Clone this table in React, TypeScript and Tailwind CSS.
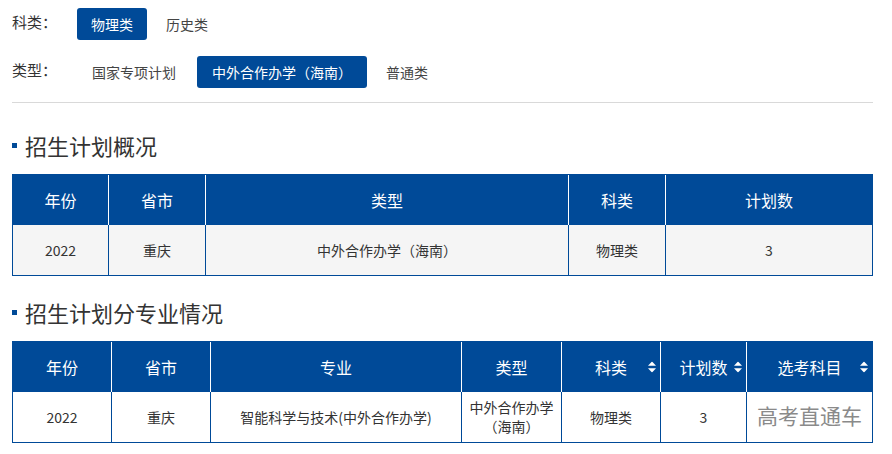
import React from 'react';

const BLUE = 'bg-[#004a98]';

function SortIcon() {
  return (
    <svg width="8" height="11" viewBox="0 0 8 11" className="absolute right-[4px] top-1/2 -translate-y-1/2" fill="#fff">
      <path d="M4 0 L8 4.3 L0 4.3 Z" />
      <path d="M0 6.7 L8 6.7 L4 11 Z" />
    </svg>
  );
}

type Col = { label: string; w?: string; sort?: boolean };

function Heading({ text, top }: { text: string; top: string }) {
  return (
    <div className={`flex items-center h-8 ${top} mb-[13px]`}>
      <span className="w-[5px] h-[5px] bg-[#004a98] mr-2" />
      <span className="text-[22px] leading-8 text-[#333]">{text}</span>
    </div>
  );
}

function DataTable({ cols, row, shaded }: { cols: Col[]; row: React.ReactNode[]; shaded?: boolean }) {
  return (
    <div className="border border-[#004a98]">
      <table className="w-full table-fixed border-separate border-spacing-0">
        <colgroup>
          {cols.map((c, i) => (
            <col key={i} className={c.w} />
          ))}
        </colgroup>
        <thead>
          <tr className={BLUE}>
            {cols.map((c, i) => (
              <th
                key={i}
                className={`relative h-[50px] p-0 text-[16px] font-normal text-white text-center ${i > 0 ? 'border-l border-white' : ''}`}
              >
                {c.label}
                {c.sort && <SortIcon />}
              </th>
            ))}
          </tr>
        </thead>
        <tbody>
          <tr className={shaded ? 'bg-[#f5f5f5]' : 'bg-white'}>
            {row.map((v, i) => (
              <td
                key={i}
                className={`h-[50px] px-1 py-0 text-[14px] leading-[19px] text-[#333] text-center ${i > 0 ? 'border-l border-[#004a98]' : ''}`}
              >
                {v}
              </td>
            ))}
          </tr>
        </tbody>
      </table>
    </div>
  );
}

export default function App() {
  return (
    <div className="w-[892px] h-[454px] bg-white overflow-hidden font-['Noto_Sans_CJK_SC',sans-serif]">
      <div className="w-[861px] ml-3 pt-2">
        {/* filters */}
        <div className="flex items-center h-8">
          <span className="w-[65px] -mt-[3px] text-[15px] text-[#333]">科类：</span>
          <span className="h-8 leading-8 px-[14px] rounded-[3px] bg-[#004a98] text-white text-[14px]">物理类</span>
          <span className="h-8 leading-8 px-[15px] ml-[4px] text-[14px] text-[#444]">历史类</span>
        </div>
        <div className="flex items-center h-8 mt-4">
          <span className="w-[65px] -mt-[3px] text-[15px] text-[#333]">类型：</span>
          <span className="h-8 leading-8 px-[15px] text-[14px] text-[#444]">国家专项计划</span>
          <span className="h-8 leading-8 px-[15px] ml-[6px] rounded-[3px] bg-[#004a98] text-white text-[14px]">中外合作办学（海南）</span>
          <span className="h-8 leading-8 px-[15px] ml-[4px] text-[14px] text-[#444]">普通类</span>
        </div>
        <div className="mt-[14px] h-px bg-[#d9d9d9]" />

        <Heading text="招生计划概况" top="mt-[26px]" />
        <DataTable
          shaded
          cols={[
            { label: '年份', w: 'w-[95px]' },
            { label: '省市', w: 'w-[97px]' },
            { label: '类型', w: 'w-[363px]' },
            { label: '科类', w: 'w-[97px]' },
            { label: '计划数' },
          ]}
          row={['2022', '重庆', '中外合作办学（海南）', '物理类', '3']}
        />

        <Heading text="招生计划分专业情况" top="mt-[20px]" />
        <DataTable
          cols={[
            { label: '年份', w: 'w-[98px]' },
            { label: '省市', w: 'w-[99px]' },
            { label: '专业', w: 'w-[251px]' },
            { label: '类型', w: 'w-[100px]' },
            { label: '科类', w: 'w-[99px]', sort: true },
            { label: '计划数', w: 'w-[86px]', sort: true },
            { label: '选考科目', sort: true },
          ]}
          row={[
            '2022',
            '重庆',
            '智能科学与技术(中外合作办学)',
            '中外合作办学（海南）',
            '物理类',
            '3',
            <span key="wm" className="text-[21px] text-[#8a8a8a] whitespace-nowrap">高考直通车</span>,
          ]}
        />
      </div>
    </div>
  );
}
